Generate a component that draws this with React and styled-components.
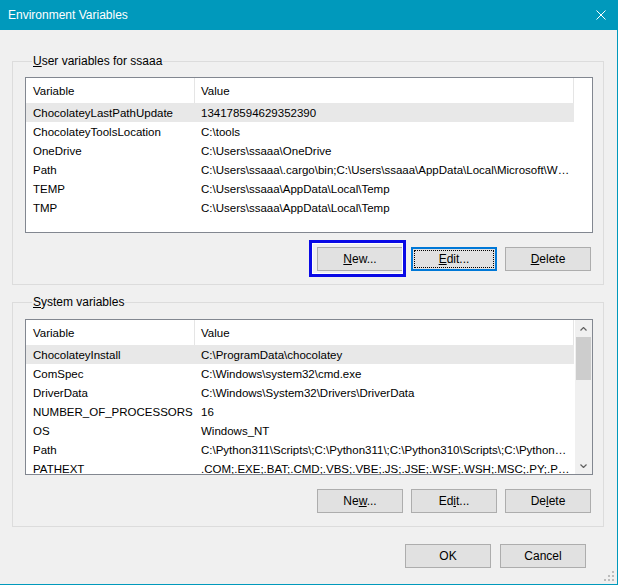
import React from "react";
import styled, { createGlobalStyle } from "styled-components";

const userVars = [
  ["ChocolateyLastPathUpdate", "134178594629352390"],
  ["ChocolateyToolsLocation", "C:\\tools"],
  ["OneDrive", "C:\\Users\\ssaaa\\OneDrive"],
  [
    "Path",
    "C:\\Users\\ssaaa\\.cargo\\bin;C:\\Users\\ssaaa\\AppData\\Local\\Microsoft\\WindowsApps;C:\\Users\\ssaaa\\.dotnet\\tools",
  ],
  ["TEMP", "C:\\Users\\ssaaa\\AppData\\Local\\Temp"],
  ["TMP", "C:\\Users\\ssaaa\\AppData\\Local\\Temp"],
];

const systemVars = [
  ["ChocolateyInstall", "C:\\ProgramData\\chocolatey"],
  ["ComSpec", "C:\\Windows\\system32\\cmd.exe"],
  ["DriverData", "C:\\Windows\\System32\\Drivers\\DriverData"],
  ["NUMBER_OF_PROCESSORS", "16"],
  ["OS", "Windows_NT"],
  [
    "Path",
    "C:\\Python311\\Scripts\\;C:\\Python311\\;C:\\Python310\\Scripts\\;C:\\Python310\\;C:\\Windows\\system32",
  ],
  ["PATHEXT", ".COM;.EXE;.BAT;.CMD;.VBS;.VBE;.JS;.JSE;.WSF;.WSH;.MSC;.PY;.PYW"],
];

const GlobalStyle = createGlobalStyle`
  html, body {
    margin: 0;
    background: #f0f0f0;
  }
  body {
    font-family: "Liberation Sans", Arial, sans-serif;
    font-size: 12px;
    color: #000;
  }
`;

const Window = styled.div`
  position: relative;
  width: 618px;
  height: 585px;
  box-sizing: border-box;
  border-right: 1px solid #0099bc;
  border-bottom: 1px solid #0099bc;
  background: #f0f0f0;
  display: flex;
  flex-direction: column;
`;

const TitleBar = styled.div`
  height: 30px;
  flex: none;
  background: #0099bc;
  color: #fff;
  display: flex;
  align-items: center;
  justify-content: space-between;
  padding: 0 11px 0 8px;
  font-size: 12px;
`;

const CloseIcon = styled.svg`
  display: block;
  width: 10px;
  height: 10px;
`;

const Body = styled.div`
  flex: 1;
  padding: 23px 13px 0 12px;
  display: flex;
  flex-direction: column;
`;

const GroupBox = styled.fieldset`
  margin: ${(p) => (p.$first ? "0" : "9px 0 0")};
  padding: ${(p) => (p.$first ? "8px" : "9px")} 10px 13px 12px;
  border: 1px solid #dcdcdc;
  min-width: 0;
`;

const Legend = styled.legend`
  margin-left: 7px;
  padding: 0 1px;
  line-height: 16px;
  font-size: 12px;
`;

const ListView = styled.div`
  height: 156px;
  box-sizing: border-box;
  border: 1px solid #828790;
  background: #fff;
  display: flex;
  overflow: hidden;
  font-size: 11.5px;
`;

const Columns = styled.div`
  flex: 1;
  min-width: 0;
  overflow: hidden;
`;

const HeaderRow = styled.div`
  display: grid;
  grid-template-columns: 169px 379px;
  height: 25px;
`;

const HeaderCell = styled.div`
  border-right: 1px solid #e5e5e5;
  padding: 1px 0 0 ${(p) => (p.$first ? "7px" : "6px")};
  line-height: 24px;
  white-space: nowrap;
`;

const Row = styled.div`
  display: grid;
  grid-template-columns: 169px 379px;
  width: 548px;
  height: 19px;
  background: ${(p) => (p.$selected ? "#e8e8e8" : "transparent")};
`;

const Cell = styled.div`
  padding: 1px ${(p) => (p.$first ? "1px 0 7px" : "4px 0 6px")};
  line-height: 18px;
  white-space: nowrap;
  overflow: hidden;
  text-overflow: ellipsis;
`;

const ScrollBar = styled.div`
  width: 17px;
  flex: none;
  background: #f0f0f0;
  display: flex;
  flex-direction: column;
`;

const ArrowButton = styled.div`
  height: 17px;
  flex: none;
  display: flex;
  align-items: center;
  justify-content: center;
`;

const Track = styled.div`
  flex: 1;
`;

const Thumb = styled.div`
  height: 43px;
  margin: 0 1px;
  background: #cdcdcd;
`;

const ButtonRow = styled.div`
  display: flex;
  justify-content: flex-end;
  gap: ${(p) => p.$gap || 8}px;
  margin-top: ${(p) => p.$top || 14}px;
  padding-right: ${(p) => p.$right || 2}px;
`;

const Button = styled.button`
  position: relative;
  width: 86px;
  height: 24px;
  box-sizing: border-box;
  margin: 0;
  padding: 0;
  background: #e1e1e1;
  border: 1px solid ${(p) => (p.$default ? "#0078d7" : "#adadad")};
  box-shadow: ${(p) => (p.$default ? "inset 0 0 0 1px #0078d7" : "none")};
  font-family: "Liberation Sans", Arial, sans-serif;
  font-size: 12px;
  color: #000;
  line-height: 20px;

  ${(p) =>
    p.$focused &&
    `
    &::after {
      content: "";
      position: absolute;
      inset: 2px;
      border: 1px dotted #000;
    }
  `}
`;

const Marker = styled.span`
  position: absolute;
  left: -9px;
  right: -4px;
  top: -8px;
  bottom: -7px;
  border: 3px solid #0a0ae6;
  box-shadow: inset 0 0 0 1px #fff;
  pointer-events: none;
`;

const Grip = styled.svg`
  position: absolute;
  right: 3px;
  bottom: 3px;
  width: 10px;
  height: 10px;
`;

function Chevron({ up }) {
  return (
    <svg width="7" height="4" viewBox="0 0 7 4">
      <path
        d={up ? "M0.5 3.5 L3.5 0.5 L6.5 3.5" : "M0.5 0.5 L3.5 3.5 L6.5 0.5"}
        fill="none"
        stroke="#606060"
        strokeWidth="1.2"
      />
    </svg>
  );
}

function VariableList({ items, scroll }) {
  return (
    <ListView>
      <Columns>
        <HeaderRow>
          <HeaderCell $first>Variable</HeaderCell>
          <HeaderCell>Value</HeaderCell>
        </HeaderRow>
        {items.map(([name, value], i) => (
          <Row key={name + i} $selected={i === 0}>
            <Cell $first>{name}</Cell>
            <Cell>{value}</Cell>
          </Row>
        ))}
      </Columns>
      {scroll && (
        <ScrollBar>
          <ArrowButton>
            <Chevron up />
          </ArrowButton>
          <Track>
            <Thumb />
          </Track>
          <ArrowButton>
            <Chevron />
          </ArrowButton>
        </ScrollBar>
      )}
    </ListView>
  );
}

export default function App() {
  return (
    <>
      <GlobalStyle />
      <Window>
        <TitleBar>
          <span>Environment Variables</span>
          <CloseIcon viewBox="0 0 10 10">
            <path d="M0.5 0.5 L9.5 9.5 M9.5 0.5 L0.5 9.5" stroke="#fff" strokeWidth="1" />
          </CloseIcon>
        </TitleBar>
        <Body>
          <GroupBox $first>
            <Legend>
              <u>U</u>ser variables for ssaaa
            </Legend>
            <VariableList items={userVars} />
            <ButtonRow>
              <Button>
                <u>N</u>ew...
                <Marker />
              </Button>
              <Button $default $focused>
                <u>E</u>dit...
              </Button>
              <Button>
                <u>D</u>elete
              </Button>
            </ButtonRow>
          </GroupBox>
          <GroupBox>
            <Legend>
              <u>S</u>ystem variables
            </Legend>
            <VariableList items={systemVars} scroll />
            <ButtonRow>
              <Button>
                Ne<u>w</u>...
              </Button>
              <Button>
                Ed<u>i</u>t...
              </Button>
              <Button>
                De<u>l</u>ete
              </Button>
            </ButtonRow>
          </GroupBox>
          <ButtonRow $top={17} $gap={9} $right={18}>
            <Button>OK</Button>
            <Button>Cancel</Button>
          </ButtonRow>
        </Body>
        <Grip viewBox="0 0 10 10">
          <rect x="8" y="0" width="2" height="2" fill="#bcbcbc" />
          <rect x="4" y="4" width="2" height="2" fill="#bcbcbc" />
          <rect x="8" y="4" width="2" height="2" fill="#bcbcbc" />
          <rect x="0" y="8" width="2" height="2" fill="#bcbcbc" />
          <rect x="4" y="8" width="2" height="2" fill="#bcbcbc" />
          <rect x="8" y="8" width="2" height="2" fill="#bcbcbc" />
        </Grip>
      </Window>
    </>
  );
}
